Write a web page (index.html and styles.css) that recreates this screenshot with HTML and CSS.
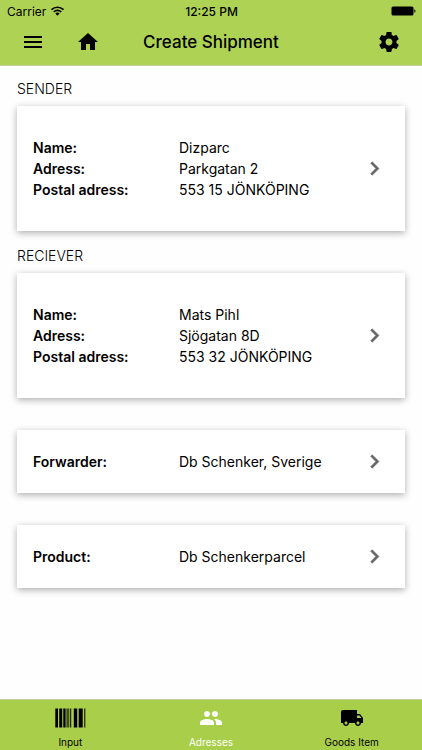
FILE: index.html
```html
<!DOCTYPE html>
<html lang="en">
<head>
<meta charset="utf-8">
<meta name="viewport" content="width=device-width, initial-scale=1">
<title>Create Shipment</title>
<link rel="stylesheet" href="styles.css">
</head>
<body>
<header class="header">
  <div class="status">
    <div class="status-left">
      <span>Carrier</span>
      <svg class="wifi" viewBox="0 0 12 9" aria-hidden="true"><path d="M.5 3.300a7.800 7.800 0 0 1 11 0M2.500 5.400a4.950 4.950 0 0 1 7 0" fill="none" stroke="currentColor" stroke-width="1.500"/><path d="M4 6.800a2.900 2.900 0 0 1 4 0L6 8.900z"/></svg>
    </div>
    <span class="status-time">12:25 PM</span>
    <svg class="battery" viewBox="0 0 25 10" aria-hidden="true"><rect x=".5" y=".5" width="22" height="9" rx="1.5"/><path d="M23.3 3.2c1.6.5 1.6 3.1 0 3.6z"/></svg>
  </div>
  <div class="navbar">
    <div class="nav-actions">
      <button class="icon-button" type="button" aria-label="Menu"><svg class="icon" viewBox="0 0 24 24"><path d="M3 18h18v-2H3v2zm0-5h18v-2H3v2zm0-7v2h18V6H3z"/></svg></button>
      <button class="icon-button" type="button" aria-label="Home"><svg class="icon" viewBox="0 0 24 24"><path d="M10 20v-6h4v6h5v-8h3L12 3 2 12h3v8z"/></svg></button>
    </div>
    <h1 class="title">Create Shipment</h1>
    <button class="icon-button settings" type="button" aria-label="Settings"><svg class="icon" viewBox="0 0 24 24"><path d="M19.43 12.98c.04-.32.07-.64.07-.98s-.03-.66-.07-.98l2.11-1.65c.19-.15.24-.42.12-.64l-2-3.46c-.12-.22-.39-.3-.61-.22l-2.49 1c-.52-.4-1.08-.73-1.69-.98l-.38-2.65C14.46 2.18 14.25 2 14 2h-4c-.25 0-.46.18-.49.42l-.38 2.65c-.61.25-1.17.59-1.69.98l-2.49-1c-.23-.09-.49 0-.61.22l-2 3.46c-.13.22-.07.49.12.64l2.11 1.65c-.04.32-.07.65-.07.98s.03.66.07.98l-2.11 1.65c-.19.15-.24.42-.12.64l2 3.46c.12.22.39.3.61.22l2.49-1c.52.4 1.08.73 1.69.98l.38 2.65c.03.24.24.42.49.42h4c.25 0 .46-.18.49-.42l.38-2.65c.61-.25 1.17-.59 1.69-.98l2.49 1c.23.09.49 0 .61-.22l2-3.46c.12-.22.07-.49-.12-.64l-2.11-1.65zM12 15.5c-1.93 0-3.5-1.57-3.5-3.5s1.57-3.5 3.5-3.5 3.5 1.57 3.5 3.5-1.57 3.5-3.5 3.5z"/></svg></button>
  </div>
</header>

<main class="content">
  <section class="group">
    <h2 class="group-title">SENDER</h2>
    <a class="card card-tall" href="#sender">
      <dl class="fields">
        <dt>Name:</dt><dd>Dizparc</dd>
        <dt>Adress:</dt><dd>Parkgatan 2</dd>
        <dt>Postal adress:</dt><dd>553 15 JÖNKÖPING</dd>
      </dl>
      <svg class="chevron" viewBox="0 0 24 24" aria-hidden="true"><path d="M10 6L8.59 7.41 13.17 12l-4.58 4.59L10 18l6-6z"/></svg>
    </a>
  </section>
  <section class="group">
    <h2 class="group-title">RECIEVER</h2>
    <a class="card card-tall" href="#reciever">
      <dl class="fields">
        <dt>Name:</dt><dd>Mats Pihl</dd>
        <dt>Adress:</dt><dd>Sjögatan 8D</dd>
        <dt>Postal adress:</dt><dd>553 32 JÖNKÖPING</dd>
      </dl>
      <svg class="chevron" viewBox="0 0 24 24" aria-hidden="true"><path d="M10 6L8.59 7.41 13.17 12l-4.58 4.59L10 18l6-6z"/></svg>
    </a>
  </section>
  <div class="options">
    <a class="card" href="#forwarder">
      <dl class="fields"><dt>Forwarder:</dt><dd>Db Schenker, Sverige</dd></dl>
      <svg class="chevron" viewBox="0 0 24 24" aria-hidden="true"><path d="M10 6L8.59 7.41 13.17 12l-4.58 4.59L10 18l6-6z"/></svg>
    </a>
    <a class="card" href="#product">
      <dl class="fields"><dt>Product:</dt><dd>Db Schenkerparcel</dd></dl>
      <svg class="chevron" viewBox="0 0 24 24" aria-hidden="true"><path d="M10 6L8.59 7.41 13.17 12l-4.58 4.59L10 18l6-6z"/></svg>
    </a>
  </div>
</main>

<nav class="tabs">
  <a class="tab" href="#input">
    <svg class="barcode" viewBox="0 0 31 20" aria-hidden="true"><path d="M.3.5H3v19H.3zM4.200.5h3v19h-3zM8.300.5h2.300v19H8.300zM11.600.5h1v19h-1zM13.400.5h.8v19h-.8zM15.200.5h1v19h-1zM18.800.5h3.400v19h-3.400zM23.700.5h4v19h-4zM29.300.5h1v19h-1z"/></svg>
    <span>Input</span>
  </a>
  <a class="tab tab-active" href="#adresses" aria-current="page">
    <svg class="icon" viewBox="0 0 24 24" aria-hidden="true"><path d="M16 11c1.66 0 2.99-1.34 2.99-3S17.66 5 16 5c-1.66 0-3 1.34-3 3s1.34 3 3 3zm-8 0c1.66 0 2.99-1.34 2.99-3S9.66 5 8 5C6.34 5 5 6.34 5 8s1.34 3 3 3zm0 2c-2.33 0-7 1.17-7 3.5V19h14v-2.5c0-2.33-4.67-3.5-7-3.5zm8 0c-.29 0-.62.02-.97.05 1.16.84 1.97 1.97 1.97 3.45V19h6v-2.5c0-2.33-4.67-3.5-7-3.5z"/></svg>
    <span>Adresses</span>
  </a>
  <a class="tab" href="#goods">
    <svg class="icon" viewBox="0 0 24 24" aria-hidden="true"><path d="M20 8h-3V4H3c-1.1 0-2 .9-2 2v11h2c0 1.66 1.34 3 3 3s3-1.34 3-3h6c0 1.66 1.34 3 3 3s3-1.34 3-3h2v-5l-3-4zM6 18.5c-.83 0-1.5-.67-1.5-1.5s.67-1.5 1.5-1.5 1.5.67 1.5 1.5-.67 1.5-1.5 1.5zm13.500-9l1.960 2.500H17V9.500h2.500zm-1.500 9c-.83 0-1.500-.67-1.500-1.500s.67-1.500 1.500-1.500 1.500.67 1.500 1.500-.67 1.500-1.500 1.500z"/></svg>
    <span>Goods Item</span>
  </a>
</nav>
</body>
</html>
```
FILE: styles.css
```css
* {
  box-sizing: border-box;
}

body {
  display: flex;
  flex-direction: column;
  min-height: 100vh;
  margin: 0;
  background: #fefefe;
  color: #000;
  font-family: Inter, "Liberation Sans", sans-serif;
  font-size: 14px;
  line-height: 21px;
}

svg {
  display: block;
  fill: currentColor;
}

.icon {
  width: 24px;
  height: 24px;
}

.header {
  padding-bottom: 3px;
  background: #aed354;
  border-bottom: 1px solid #c3cfa2;
}

.status,
.navbar {
  display: grid;
  grid-template-columns: 1fr auto 1fr;
  align-items: center;
}

.status {
  height: 22px;
  padding: 0 6px 0 7px;
  font-size: 12px;
}

.status-left {
  display: flex;
  align-items: center;
  gap: 5px;
}

.wifi {
  width: 13px;
  height: 10px;
}

.status-time {
  font-weight: 500;
}

.battery {
  justify-self: end;
  width: 25px;
  height: 10px;
}

.navbar {
  height: 40px;
  padding: 0 21px;
}

.nav-actions {
  display: flex;
  gap: 31px;
}

.icon-button {
  padding: 0;
  border: 0;
  background: none;
  color: inherit;
}

.settings {
  justify-self: end;
}

.title {
  margin: 0;
  font-size: 17px;
  font-weight: 500;
  line-height: 24px;
}

.content {
  flex: 1;
  padding: 13px 17px 32px;
}

.group {
  margin-bottom: 15px;
}

.group-title {
  margin: 0 0 7px;
  font-size: 14px;
  font-weight: 300;
  line-height: 20px;
}

.card {
  display: flex;
  align-items: center;
  padding: 21px 17px 21px 16px;
  background: #fff;
  box-shadow: 0 2px 7px rgba(0, 0, 0, 0.32);
  color: inherit;
  text-decoration: none;
}

.card-tall {
  padding-block: 31px;
}

.fields {
  display: grid;
  flex: 1;
  grid-template-columns: 146px 1fr;
  margin: 0;
}

.fields dt {
  font-weight: 600;
}

.fields dd {
  margin: 0;
}

.chevron {
  width: 27px;
  height: 27px;
  margin-block: -3px;
  color: #666;
  stroke: currentColor;
  stroke-width: 0.5;
}

.options {
  display: grid;
  gap: 32px;
  margin-top: 32px;
}

.tabs {
  display: grid;
  grid-template-columns: repeat(3, 1fr);
  border-top: 1px solid #c3cfa2;
  background: #a9ce4a;
}

.tab {
  display: flex;
  flex-direction: column;
  align-items: center;
  justify-content: space-between;
  height: 50px;
  padding: 6px 0 1px;
  color: #000;
  font-size: 10px;
  line-height: 14px;
  text-decoration: none;
}

.tab-active {
  color: #fff;
}

.barcode {
  width: 31px;
  height: 24px;
}
```
